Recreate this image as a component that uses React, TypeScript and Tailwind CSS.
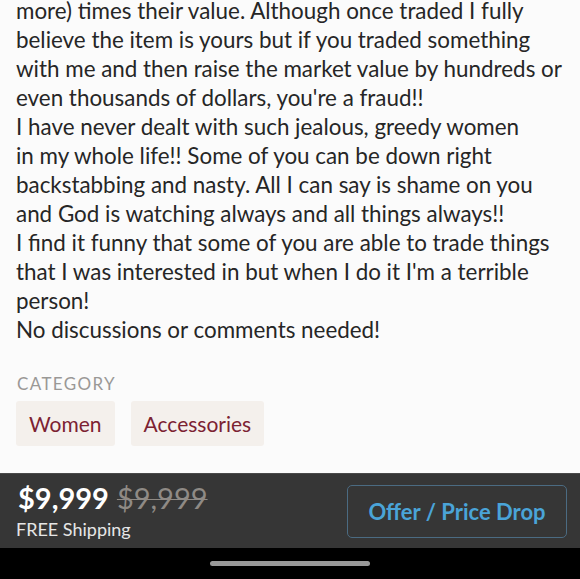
import React from "react";

const lines = [
  "more) times their value. Although once traded I fully",
  "believe the item is yours but if you traded something",
  "with me and then raise the market value by hundreds or",
  "even thousands of dollars, you're a fraud!!",
  "I have never dealt with such jealous, greedy women",
  "in my whole life!! Some of you can be down right",
  "backstabbing and nasty. All I can say is shame on you",
  "and God is watching always and all things always!!",
  "I find it funny that some of you are able to trade things",
  "that I was interested in but when I do it I'm a terrible",
  "person!",
  "No discussions or comments needed!",
];

export default function App() {
  return (
    <div className="w-[580px] h-[579px] overflow-hidden bg-[#fbfbfb] flex flex-col font-['Lato',sans-serif]">
      <div className="flex-1 flex flex-col px-4 -mt-[4px]">
        <div className="text-[22.4px] leading-[29px] text-[#262626]">
          {lines.map((l) => (
            <div key={l} className="whitespace-nowrap">{l}</div>
          ))}
        </div>
        <div className="mt-[31px] text-[17px] tracking-[0.08em] text-[#9a9896] leading-none pl-px">CATEGORY</div>
        <div className="mt-[9px] flex gap-4">
          <div className="h-[45px] px-[13px] flex items-center rounded-[3px] bg-[#f4f0ec] text-[21px] text-[#7c2232]">Women</div>
          <div className="h-[45px] px-[13px] flex items-center rounded-[3px] bg-[#f4f0ec] text-[21px] text-[#7c2232]">Accessories</div>
        </div>
      </div>
      <div className="h-[75px] bg-[#363636] border-t border-[#4a4a4a] flex items-center justify-between pl-4 pr-[13px]">
        <div className="flex flex-col -mt-[2px]">
          <div className="flex items-baseline gap-[8px] leading-none pl-[2px]">
            <span className="text-[29px] font-bold text-white">$9,999</span>
            <span className="text-[29px] text-[#8f8a85] line-through decoration-1">$9,999</span>
          </div>
          <div className="mt-[8px] text-[18px] leading-none text-[#e6e6e6]">FREE Shipping</div>
        </div>
        <div className="w-[220px] h-[53px] rounded-[5px] border border-[#4b6b82] flex items-center justify-center text-[22px] font-bold text-[#4aa4d8]">
          Offer / Price Drop
        </div>
      </div>
      <div className="h-[31px] bg-black flex items-center justify-center">
        <div className="w-[160px] h-[5px] rounded-full bg-[#999]" />
      </div>
    </div>
  );
}
